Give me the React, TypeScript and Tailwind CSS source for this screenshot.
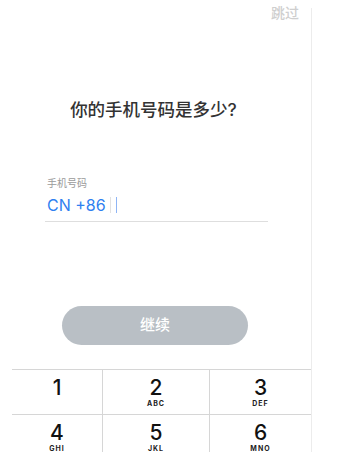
const KEYS: { d: string; l: string }[] = [
  { d: '1', l: '' },
  { d: '2', l: 'ABC' },
  { d: '3', l: 'DEF' },
  { d: '4', l: 'GHI' },
  { d: '5', l: 'JKL' },
  { d: '6', l: 'MNO' },
];

const COLS = ['w-[91px]', 'w-[107px]', 'w-[101px]'];

export default function App() {
  return (
    <div
      className="flex w-[348px] h-[452px] overflow-hidden bg-white"
      style={{ fontFamily: '"Inter", "Noto Sans CJK SC", sans-serif' }}
    >
      <div className="flex flex-col w-[311px] shrink-0">
        {/* Skip */}
        <div className="flex justify-end pr-[12px] pt-[4px] h-[24px]">
          <span className="text-[14px] leading-[18px] text-[#cfcfcf] font-medium">跳过</span>
        </div>

        {/* Title */}
        <h1 className="mt-[77px] text-center pr-[4px] text-[17.5px] leading-[22px] font-medium text-[#333]">
          你的手机号码是多少?
        </h1>

        {/* Phone field */}
        <div className="mt-[56px] ml-[45px] w-[223px]">
          <div className="pl-[2px] text-[10px] leading-[12px] text-[#9a9a9a]">手机号码</div>
          <div className="flex items-center h-[29px] mt-[4px] pl-[2px] border-b border-[#dedede] pb-[5px]">
            <span className="text-[16px] leading-[20px] text-[#2f80f0]">CN +86</span>
            <span className="ml-[4px] w-px h-[16px] bg-[#e2e2e2]" />
            <span className="ml-[5px] w-px h-[16px] bg-[#8fb5f5]" />
          </div>
        </div>

        {/* Continue */}
        <div className="mt-[84px] flex justify-center pr-[1px]">
          <button
            type="button"
            className="w-[186px] h-[39px] rounded-full bg-[#b9bfc5] text-white text-[15px] font-medium"
          >
            继续
          </button>
        </div>

        {/* Keypad */}
        <div className="mt-[24px] ml-[12px] grid grid-cols-[91px_107px_101px] border-t border-[#d6d6d6]">
          {KEYS.map((k, i) => (
            <div
              key={k.d}
              className={`${COLS[i % 3]} h-[45px] flex flex-col items-center pt-[7px] border-b border-[#d6d6d6] ${
                i % 3 !== 2 ? 'border-r' : ''
              } border-r-[#d6d6d6]`}
              style={{ fontFamily: '"Inter", sans-serif' }}
            >
              <span className="text-[21px] leading-[22px] font-medium text-[#111]">{k.d}</span>
              {k.l && (
                <span className="text-[7px] leading-[9px] font-bold tracking-[1px] text-[#222]">
                  {k.l}
                </span>
              )}
            </div>
          ))}
        </div>
      </div>
      <div className="w-px mt-[8px] bg-[#ececec] shrink-0" />
    </div>
  );
}
